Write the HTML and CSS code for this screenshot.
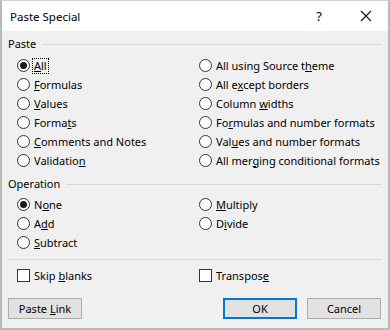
FILE: index.html
```html
<!DOCTYPE html>
<html lang="en">
<head>
    <meta charset="UTF-8">
    <title>Paste Special</title>
    <link rel="stylesheet" href="styles.css">
</head>
<body>
    <div class="dialog">
        <div class="titlebar">
            <span class="title">Paste Special</span>
            <span class="help">?</span>
            <svg class="close" width="12" height="12" viewBox="0 0 12 12">
                <path d="M1 1L11 11M11 1L1 11" stroke="#111" stroke-width="1.1" fill="none"/>
            </svg>
        </div>

        <div class="content">
            <div class="legend">Paste</div>
            <div class="options">
                <div class="opt"><span class="radio on"></span><span class="label focus"><u>A</u>ll</span></div>
                <div class="opt"><span class="radio"></span><span class="label">All using Source t<u>h</u>eme</span></div>
                <div class="opt"><span class="radio"></span><span class="label"><u>F</u>ormulas</span></div>
                <div class="opt"><span class="radio"></span><span class="label">All e<u>x</u>cept borders</span></div>
                <div class="opt"><span class="radio"></span><span class="label"><u>V</u>alues</span></div>
                <div class="opt"><span class="radio"></span><span class="label">Column <u>w</u>idths</span></div>
                <div class="opt"><span class="radio"></span><span class="label">Forma<u>t</u>s</span></div>
                <div class="opt"><span class="radio"></span><span class="label">Fo<u>r</u>mulas and number formats</span></div>
                <div class="opt"><span class="radio"></span><span class="label"><u>C</u>omments and Notes</span></div>
                <div class="opt"><span class="radio"></span><span class="label">Val<u>u</u>es and number formats</span></div>
                <div class="opt"><span class="radio"></span><span class="label">Validatio<u>n</u></span></div>
                <div class="opt"><span class="radio"></span><span class="label">All mer<u>g</u>ing conditional formats</span></div>
            </div>

            <div class="legend op">Operation</div>
            <div class="options op-list">
                <div class="opt"><span class="radio on"></span><span class="label">N<u>o</u>ne</span></div>
                <div class="opt"><span class="radio"></span><span class="label"><u>M</u>ultiply</span></div>
                <div class="opt"><span class="radio"></span><span class="label">A<u>d</u>d</span></div>
                <div class="opt"><span class="radio"></span><span class="label">D<u>i</u>vide</span></div>
                <div class="opt"><span class="radio"></span><span class="label"><u>S</u>ubtract</span></div>
            </div>

            <div class="sep"></div>

            <div class="options checks">
                <div class="opt"><span class="check"></span><span class="label">Skip <u>b</u>lanks</span></div>
                <div class="opt"><span class="check"></span><span class="label">Transpos<u>e</u></span></div>
            </div>

            <div class="buttons">
                <button class="btn">Paste <u>L</u>ink</button>
                <div class="right">
                    <button class="btn default">OK</button>
                    <button class="btn">Cancel</button>
                </div>
            </div>
        </div>
    </div>
</body>
</html>
```

FILE: styles.css
```css
body {
    margin: 0;
    font-family: "Noto Sans", "Open Sans", sans-serif;
    font-size: 11px;
    color: #000;
}
.dialog {
    width: 390px;
    height: 330px;
    box-sizing: border-box;
    border: 2px solid #b9b9b9;
    border-top: 1px solid #d2d2d2;
    background-color: #f0f0f0;
}
.titlebar {
    height: 30px;
    background-color: #fff;
    display: flex;
    align-items: center;
    padding-left: 8px;
    font-size: 11.5px;
}
.title {
    flex: 1;
}
.help {
    font-size: 13px;
    margin-right: 38px;
}
.close {
    margin-right: 16px;
}

.content {
    padding: 0 6px;
}
.legend {
    display: flex;
    align-items: center;
    gap: 6px;
    height: 16px;
    line-height: 16px;
    margin-top: 5px;
}
.legend::after {
    content: '';
    flex: 1;
    border-top: 1px solid #d7d7d7;
}
.legend.op {
    margin-top: 6px;
}

.options {
    display: grid;
    grid-template-columns: 182px 1fr;
    padding-left: 9px;
    margin-top: 4px;
}
.options.op-list {
    margin-top: 3px;
}
.opt {
    display: flex;
    align-items: center;
    gap: 4px;
    height: 19px;
}
.label {
    line-height: 14px;
    white-space: nowrap;
}
.label.focus {
    outline: 1px dotted #000;
    outline-offset: 0;
    padding: 0 1px;
    margin-left: -1px;
}
.radio {
    width: 13px;
    height: 13px;
    box-sizing: border-box;
    border: 1px solid #333;
    border-radius: 50%;
    background-color: #fff;
    display: flex;
    align-items: center;
    justify-content: center;
}
.radio.on::after {
    content: '';
    width: 7px;
    height: 7px;
    border-radius: 50%;
    background-color: #1a1a1a;
}
.check {
    width: 13px;
    height: 13px;
    box-sizing: border-box;
    border: 1px solid #333;
    background-color: #fff;
}

.sep {
    margin-top: 7px;
    border-top: 1px solid #d7d7d7;
}
.options.checks {
    margin-top: 6px;
}

.buttons {
    display: flex;
    justify-content: space-between;
    margin-top: 13px;
}
.buttons .right {
    display: flex;
    gap: 10px;
    margin-right: 1px;
}
.btn {
    width: 74px;
    height: 21px;
    box-sizing: border-box;
    font: inherit;
    color: #000;
    background-color: #e1e1e1;
    border: 1px solid #adadad;
    padding: 0;
}
.btn.default {
    border: 2px solid #0078d7;
}
```
